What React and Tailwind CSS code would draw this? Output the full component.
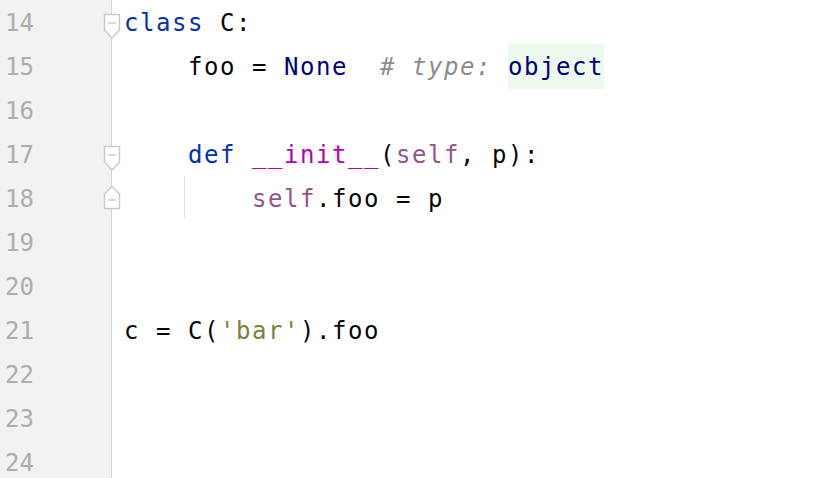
import React from 'react';

const KW = 'text-[#0033b3]';
const NAVY = 'text-[#000080]';
const SELF = 'text-[#94558d]';
const MAGIC = 'text-[#b200b2]';
const STR = 'text-[#817d3c]';
const COMMENT = 'text-[#8c8c8c] italic';

const FoldDown = () => (
  <svg className="absolute left-[103px] top-0" width="19" height="44" viewBox="0 0 19 44">
    <path d="M1.5 14.5 H16.5 V30 L9 38 L1.5 30 Z" fill="#ffffff" stroke="#c9c9c9" strokeWidth="1.4" />
    <line x1="5" y1="23" x2="13" y2="23" stroke="#c9c9c9" strokeWidth="1.4" />
  </svg>
);

const FoldUp = () => (
  <svg className="absolute left-[103px] top-0" width="19" height="44" viewBox="0 0 19 44">
    <path d="M1.5 32.5 H16.5 V18 L9 10.5 L1.5 18 Z" fill="#ffffff" stroke="#c9c9c9" strokeWidth="1.4" />
    <line x1="5" y1="24" x2="13" y2="24" stroke="#c9c9c9" strokeWidth="1.4" />
  </svg>
);

const lines = [
  {
    n: 14,
    fold: 'down',
    code: (
      <>
        <span className={KW}>class</span> C:
      </>
    ),
  },
  {
    n: 15,
    code: (
      <>
        {'    foo = '}
        <span className={NAVY}>None</span>
        {'  '}
        <span className={COMMENT}># type: </span>
        <span className={`${NAVY} bg-[#edf9ec] pt-[9px] pb-[8px]`}>object</span>
      </>
    ),
  },
  { n: 16, code: '' },
  {
    n: 17,
    fold: 'down',
    code: (
      <>
        {'    '}
        <span className={KW}>def</span> <span className={MAGIC}>__init__</span>(
        <span className={SELF}>self</span>, p):
      </>
    ),
  },
  {
    n: 18,
    fold: 'up',
    guide: true,
    code: (
      <>
        {'        '}
        <span className={SELF}>self</span>.foo = p
      </>
    ),
  },
  { n: 19, code: '' },
  { n: 20, code: '' },
  {
    n: 21,
    code: (
      <>
        c = C(<span className={STR}>'bar'</span>).foo
      </>
    ),
  },
  { n: 22, code: '' },
  { n: 23, code: '' },
  { n: 24, code: '' },
];

export default function App() {
  return (
    <div
      className="w-[838px] h-[478px] overflow-hidden bg-white flex flex-col"
      style={{ fontFamily: '"DejaVu Sans Mono", monospace' }}
    >
      {lines.map((l) => (
        <div key={l.n} className="relative flex h-[44px] shrink-0">
          <div className="w-[112px] shrink-0 bg-[#f2f2f2] border-r border-[#d5d5d5] pl-[5px] pt-[2px] text-[24px] leading-[42px] text-[#adadad]">
            {l.n}
          </div>
          <div className="flex-1 pl-[12px] pt-[2px] text-[24px] leading-[42px] tracking-[1.55px] text-[#080808] whitespace-pre">
            {l.code}
          </div>
          {l.guide && <div className="absolute left-[184px] top-0 h-[42px] w-px bg-[#e0e0e0]" />}
          {l.fold === 'down' && <FoldDown />}
          {l.fold === 'up' && <FoldUp />}
        </div>
      ))}
    </div>
  );
}
